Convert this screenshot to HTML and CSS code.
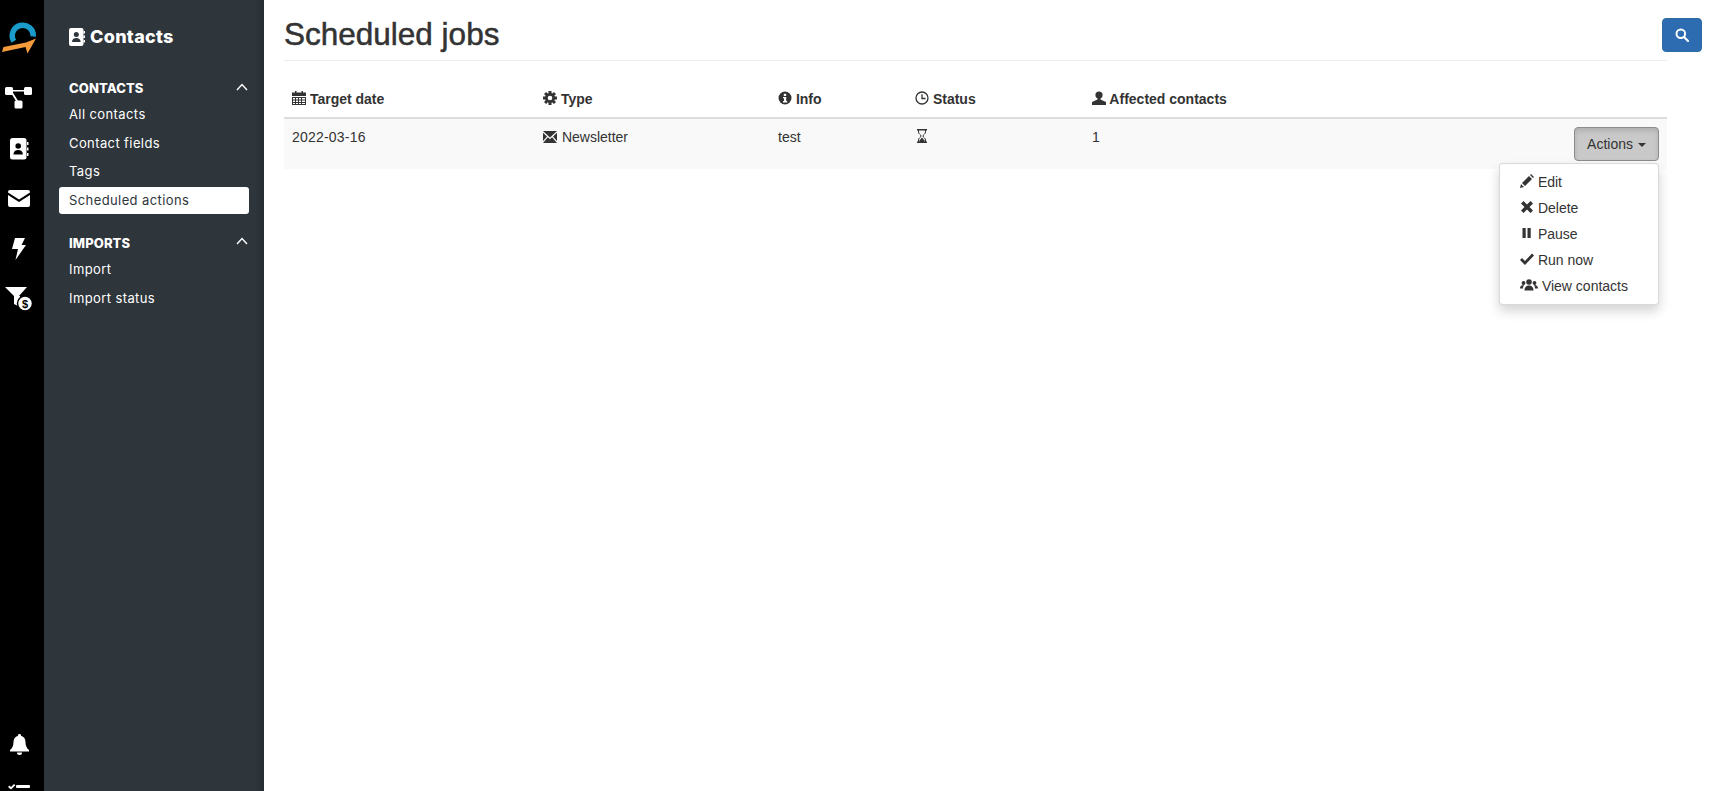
FILE: index.html
```html
<!DOCTYPE html>
<html lang="en">
<head>
  <meta charset="UTF-8" />
  <title>Scheduled jobs</title>
  <link rel="stylesheet" href="styles.css">
</head>
<body>

  <!-- Icon rail -->
  <nav class="rail">
    <a class="rail-logo" href="#">
      <svg width="38" height="32" viewBox="0 0 38 32">
        <path d="M13.800 19.200 A10.500 10.500 0 1 1 33.200 14.500" fill="none" stroke="#1a9bc9" stroke-width="5.500"/>
        <path d="M2 30 L3.500 25 L26 20.500 L36 16.500 L27.500 31.500 L25.500 25 Z" fill="#f59b3c"/>
      </svg>
    </a>
    <a class="rail-item rail-item-up" href="#">
      <svg width="28" height="22" viewBox="0 0 28 22" fill="#fff">
        <rect x="0" y="0" width="8" height="8" rx="1.500"/>
        <rect x="19" y="0" width="8" height="8" rx="1.500"/>
        <rect x="9.500" y="13.500" width="8" height="8" rx="1.500"/>
        <path d="M7 3h13v1.600H7zM6 6l1.500-1 6 9.500-1.500 1z"/>
      </svg>
    </a>
    <a class="rail-item" href="#">
      <svg width="20" height="22" viewBox="0 0 20 22">
        <rect x="1" y="0" width="16.500" height="21.500" rx="2.500" fill="#fff"/>
        <path d="M18 4h1.500v3H18zM18 9.500h1.500v3H18zM18 15h1.500v3H18z" fill="#fff"/>
        <circle cx="9.200" cy="8" r="2.800" fill="#000"/>
        <path d="M4.500 16.500c0-3.200 2-4.500 4.700-4.500s4.700 1.300 4.700 4.500z" fill="#000"/>
      </svg>
    </a>
    <a class="rail-item rail-item-up" href="#">
      <svg width="22" height="17" viewBox="0 0 22 17" fill="#fff">
        <path d="M2 0h18a2 2 0 0 1 2 2v.5L11 9.500 0 2.500V2a2 2 0 0 1 2-2z"/>
        <path d="M0 5l11 7 11-7v10a2 2 0 0 1-2 2H2a2 2 0 0 1-2-2z"/>
      </svg>
    </a>
    <a class="rail-item" href="#">
      <svg width="14" height="22" viewBox="0 0 14 22" fill="#fff">
        <path d="M3 0h10L9.500 7H14L3.500 22 6 11H0z"/>
      </svg>
    </a>
    <a class="rail-item" href="#">
      <svg width="28" height="24" viewBox="0 0 28 24">
        <path d="M0 0h22l-8 9v9l-5-3V9z" fill="#fff"/>
        <path d="M9 9h6v11l-6-3z" fill="#fff"/>
        <circle cx="20" cy="16.500" r="7.500" fill="#fff" stroke="#000" stroke-width="1.500"/>
        <text x="20" y="20.500" class="rail-dollar">$</text>
      </svg>
    </a>
    <div class="rail-bottom">
      <a class="rail-item" href="#">
        <svg width="19" height="21" viewBox="0 0 19 21" fill="#fff">
          <path d="M9.500 0a1.500 1.500 0 0 1 1.500 1.700c3 .8 4.500 3.300 4.500 6.300 0 3.500 1 6 3.500 8v1.500H0V16c2.500-2 3.500-4.500 3.500-8 0-3 1.500-5.500 4.500-6.300A1.500 1.500 0 0 1 9.500 0z"/>
          <path d="M7 18.500h5a2.500 2.500 0 0 1-5 0z"/>
        </svg>
      </a>
      <a class="rail-item" href="#">
        <svg width="22" height="20" viewBox="0 0 22 20" fill="#fff">
          <path d="M0 3l1.500-1.500L3 3l3-3 1.300 1.300L3 5.600z"/>
          <rect x="8" y="1" width="14" height="3" rx="1"/>
          <rect x="8" y="9" width="14" height="3" rx="1"/>
          <rect x="8" y="17" width="14" height="3" rx="1"/>
        </svg>
      </a>
    </div>
  </nav>

  <!-- Section menu -->
  <aside class="sidebar">
    <div class="sidebar-title">
      <svg width="16" height="18" viewBox="0 0 16 18">
        <rect width="14.500" height="18" rx="2" fill="#fff"/>
        <path d="M14.500 3H16v2.500h-1.500zM14.500 7.500H16V10h-1.500zM14.500 12H16v2.500h-1.500z" fill="#fff"/>
        <circle cx="7.300" cy="6.500" r="2.500" fill="#2e353b"/>
        <path d="M3 14c0-2.800 1.800-4 4.300-4s4.300 1.200 4.300 4z" fill="#2e353b"/>
      </svg>
      Contacts
    </div>

    <div class="menu-group">
      <div class="menu-head">
        CONTACTS
        <svg class="chevron" width="12" height="8" viewBox="0 0 12 8"><path d="M1 7l5-5.500L11 7" fill="none" stroke="#fff" stroke-width="1.400"/></svg>
      </div>
      <a class="menu-item" href="#">All contacts</a>
      <a class="menu-item" href="#">Contact fields</a>
      <a class="menu-item" href="#">Tags</a>
      <a class="menu-item active" href="#">Scheduled actions</a>
    </div>

    <div class="menu-group">
      <div class="menu-head">
        IMPORTS
        <svg class="chevron" width="12" height="8" viewBox="0 0 12 8"><path d="M1 7l5-5.500L11 7" fill="none" stroke="#fff" stroke-width="1.400"/></svg>
      </div>
      <a class="menu-item" href="#">Import</a>
      <a class="menu-item" href="#">Import status</a>
    </div>
  </aside>

  <main class="content">
    <h1 class="page-title">Scheduled jobs</h1>
    <button class="search-btn" aria-label="Search">
      <svg width="14" height="14" viewBox="0 0 14 14"><circle cx="5.800" cy="5.800" r="4.300" fill="none" stroke="#fff" stroke-width="2"/><path d="M9 9l4 4" stroke="#fff" stroke-width="2.200" stroke-linecap="round"/></svg>
    </button>

    <table class="jobs">
      <colgroup>
        <col class="col-date"><col class="col-type"><col class="col-info"><col class="col-status"><col class="col-affected"><col>
      </colgroup>
      <thead>
        <tr>
          <th>
            <svg class="icon" width="14" height="14" viewBox="0 0 14 14" fill="#333"><path d="M3 0h1.500v1.500h5V0H11v1.500h3V5H0V1.500h3z"/><path d="M0 6h14v8H0zM1 7v1.400h2V7zm3 0v1.400h2V7zm3 0v1.400h2V7zm3 0v1.400h3V7zM1 9.500v1.400h2V9.500zm3 0v1.400h2V9.500zm3 0v1.400h2V9.500zm3 0v1.400h3V9.500zM1 12v1h2v-1zm3 0v1h2v-1zm3 0v1h2v-1zm3 0v1h3v-1z" fill-rule="evenodd"/></svg>
            Target date
          </th>
          <th>
            <svg class="icon" width="14" height="14" viewBox="0 0 14 14" fill="#333">
              <rect x="5.500" y="0" width="3" height="14"/>
              <rect x="5.500" y="0" width="3" height="14" transform="rotate(45 7 7)"/>
              <rect x="5.500" y="0" width="3" height="14" transform="rotate(90 7 7)"/>
              <rect x="5.500" y="0" width="3" height="14" transform="rotate(135 7 7)"/>
              <circle cx="7" cy="7" r="5"/>
              <circle cx="7" cy="7" r="2.300" fill="#fff"/>
            </svg>
            Type
          </th>
          <th>
            <svg class="icon" width="14" height="14" viewBox="0 0 14 14"><circle cx="7" cy="7" r="6.500" fill="#333"/><rect x="5.800" y="2.800" width="2.400" height="2.200" fill="#fff"/><path d="M5 6h3.200v4h1v1.400H5V10h1V7.300H5z" fill="#fff"/></svg>
            Info
          </th>
          <th>
            <svg class="icon" width="14" height="14" viewBox="0 0 14 14" fill="none" stroke="#333"><circle cx="7" cy="7" r="6" stroke-width="1.300"/><path d="M7 3.200V7.500H10.500" stroke-width="1.300"/></svg>
            Status
          </th>
          <th>
            <svg class="icon" width="14" height="14" viewBox="0 0 14 14" fill="#333"><circle cx="7" cy="4" r="3.600"/><path d="M5.500 7h3v1.500L14 11v3H0v-3l5.500-2.500z"/></svg>
            Affected contacts
          </th>
          <th></th>
        </tr>
      </thead>
      <tbody>
        <tr>
          <td class="cell-date">2022-03-16</td>
          <td>
            <svg class="icon icon-mail" width="14" height="12" viewBox="0 0 14 12" fill="#333"><path d="M0 0h14L7 6.500z"/><path d="M0 1.800L4 5.500 0 10zM14 1.800L10 5.500l4 4.500zM4.900 6.300L7 8.200l2.100-1.900L14 12H0z"/></svg>
            Newsletter
          </td>
          <td>test</td>
          <td>
            <svg class="icon" width="14" height="14" viewBox="-2 0 14 14" fill="none" stroke="#333"><path d="M0 .8h10M0 13.200h10" stroke-width="1.600"/><path d="M1.500 1v2c0 2 2.500 2.700 2.500 4S1.500 9 1.500 11v2M8.500 1v2C8.500 5 6 5.700 6 7s2.500 2 2.500 4v2" stroke-width="1"/><path d="M2.500 11.500L5 8.500l2.500 3v1.500h-5z" fill="#333" stroke="none"/></svg>
          </td>
          <td>1</td>
          <td class="cell-actions">
            <button class="actions-btn">Actions <span class="caret"></span></button>
            <ul class="dropdown">
              <li>
                <svg class="icon" width="14" height="14" viewBox="0 0 14 14" fill="#333"><path d="M0 14l1-4 3 3zM2 9l7-7 3 3-7 7zM10 1l1-1 3 3-1 1z"/></svg>
                Edit
              </li>
              <li>
                <svg class="icon" width="14" height="14" viewBox="0 0 14 14" fill="#333"><path d="M3.500 1L7 4.500 10.500 1 13 3.500 9.500 7l3.500 3.500-2.500 2.500L7 9.500 3.500 13 1 10.500 4.500 7 1 3.500z"/></svg>
                Delete
              </li>
              <li>
                <svg class="icon" width="14" height="14" viewBox="0 0 14 14" fill="#333"><path d="M2.500 2h3.200v10H2.500zM7.500 2h3.200v10H7.500z"/></svg>
                Pause
              </li>
              <li>
                <svg class="icon" width="14" height="14" viewBox="0 0 14 14" fill="#333"><path d="M0 8l2-2 3 3 7-7.500L14 3.500 5 13z"/></svg>
                Run now
              </li>
              <li>
                <svg class="icon" width="18" height="14" viewBox="0 0 18 14" fill="#333"><circle cx="9" cy="4" r="2.800"/><path d="M4.500 12.500c0-3.500 2-5 4.500-5s4.500 1.500 4.500 5z"/><circle cx="3.500" cy="5" r="1.900"/><circle cx="14.500" cy="5" r="1.900"/><path d="M0 10.500c0-2 1.200-3.400 3.500-3.400l.5.100c-.8 1-1 2.200-1 3.300zM18 10.500c0-2-1.200-3.400-3.500-3.400l-.5.100c.8 1 1 2.200 1 3.300z"/></svg>
                View contacts
              </li>
            </ul>
          </td>
        </tr>
      </tbody>
    </table>
  </main>

</body>
</html>
```

FILE: styles.css
```css
/* Page */
html, body {
  margin: 0;
  padding: 0;
  height: 100%;
  overflow: hidden;
}
body {
  display: flex;
  font-family: "Liberation Sans", Arial, sans-serif;
  font-size: 14px;
  line-height: 20px;
  color: #333;
  background: #fff;
}
a {
  text-decoration: none;
}

/* Icon rail */
.rail {
  flex: 0 0 44px;
  height: 100vh;
  background: #000;
  display: flex;
  flex-direction: column;
  align-items: center;
}
.rail-logo {
  display: flex;
  height: 51px;
  padding-top: 22px;
  width: 44px;
  justify-content: flex-start;
}
.rail-item {
  display: flex;
  align-items: center;
  justify-content: center;
  height: 50px;
  width: 44px;
  padding: 2px 6px 0 0;
  box-sizing: border-box;
}
.rail-item-up {
  padding-top: 0;
}
.rail-dollar {
  font-family: "Liberation Sans", sans-serif;
  font-size: 11px;
  font-weight: 700;
  fill: #000;
  text-anchor: middle;
}
.rail-bottom {
  margin-top: auto;
  margin-bottom: -27px;
}

/* Section menu */
.sidebar {
  flex: 0 0 220px;
  box-sizing: border-box;
  height: 100vh;
  padding: 26px 15px 0;
  background: linear-gradient(to right, #2e353b 0, #2e353b 212px, #262c31 220px);
  color: #fff;
  font-family: Inter, "Noto Sans", sans-serif;
}
.sidebar-title {
  display: flex;
  align-items: center;
  gap: 5px;
  margin-bottom: 29px;
  padding-left: 10px;
  height: 22px;
  font-size: 18px;
  font-weight: 800;
  letter-spacing: .3px;
}
.menu-group {
  margin-bottom: 18.100px;
}
.menu-head {
  display: flex;
  justify-content: space-between;
  align-items: center;
  height: 22px;
  margin-bottom: 2.400px;
  padding: 0 1px 0 10px;
  font-size: 13px;
  font-weight: 800;
  letter-spacing: .1px;
}
.chevron {
  margin-top: -3px;
}
.menu-item {
  display: block;
  height: 27px;
  margin-bottom: 1.500px;
  padding-left: 10px;
  border-radius: 3px;
  font-size: 13px;
  line-height: 27px;
  letter-spacing: .4px;
  color: #fff;
}
.menu-item.active {
  background: #fff;
  color: #2e353b;
}

/* Main column */
.content {
  flex: 1;
  position: relative;
  padding: 0 45px 0 20px;
  min-width: 0;
}
.page-title {
  margin: 0;
  height: 60px;
  border-bottom: 1px solid #eee;
  font-size: 31.500px;
  font-weight: 400;
  line-height: 68px;
  -webkit-text-stroke: .5px #333;
}
.search-btn {
  position: absolute;
  top: 18px;
  right: 10px;
  width: 40px;
  height: 34px;
  padding: 0;
  display: flex;
  align-items: center;
  justify-content: center;
  background: #2d6cb0;
  border: 1px solid #2e6da4;
  border-radius: 4px;
}

/* Jobs table */
.jobs {
  width: 100%;
  margin-top: 20px;
  border-collapse: separate;
  border-spacing: 0;
  table-layout: fixed;
}
.col-date { width: 251px; }
.col-type { width: 235px; }
.col-info { width: 137px; }
.col-status { width: 177px; }
.col-affected { width: 300px; }
.jobs th {
  padding: 8px;
  text-align: left;
  font-weight: 700;
  border-bottom: 2px solid #ddd;
}
.jobs td {
  padding: 8px;
  vertical-align: top;
  background: #f9f9f9;
}
.cell-date {
  letter-spacing: .2px;
}
.icon {
  vertical-align: -1px;
}
.icon-mail {
  margin-right: 1px;
}
.cell-actions {
  position: relative;
  text-align: right;
}

/* Actions dropdown */
.actions-btn {
  height: 34px;
  width: 85px;
  padding: 0;
  font: inherit;
  color: #333;
  background: #c9c9c9;
  border: 1px solid #8c8c8c;
  border-radius: 4px;
  box-shadow: inset 0 3px 5px rgba(0,0,0,.125);
  vertical-align: top;
}
.caret {
  display: inline-block;
  width: 0;
  height: 0;
  margin-left: 1px;
  vertical-align: middle;
  border-top: 4px solid #333;
  border-left: 4px solid transparent;
  border-right: 4px solid transparent;
}
.dropdown {
  position: absolute;
  top: 44px;
  right: 8px;
  z-index: 10;
  width: 160px;
  box-sizing: border-box;
  margin: 0;
  padding: 5px 0;
  list-style: none;
  text-align: left;
  background: #fff;
  border: 1px solid rgba(0,0,0,.15);
  border-radius: 4px;
  box-shadow: 0 6px 12px rgba(0,0,0,.175);
}
.dropdown li {
  padding: 3px 20px;
  white-space: nowrap;
}
```
